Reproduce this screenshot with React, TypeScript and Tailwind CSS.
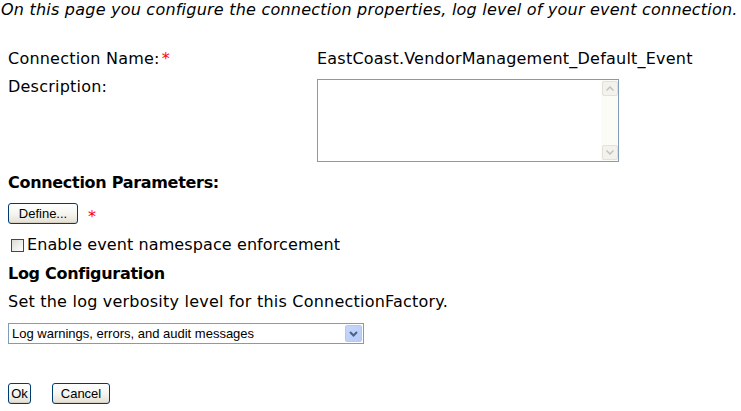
import React from "react";

const XpButton = ({ label, w }: { label: string; w: string }) => (
  <button
    className={`${w} h-[21px] rounded-[3px] border border-[#003c74] bg-gradient-to-b from-white via-[#f6f5f0] to-[#e3e0d3] font-['Liberation_Sans',sans-serif] text-[13px] leading-[19px] tracking-normal text-black shadow-[inset_0_-1px_0_#d6d0c5]`}
  >
    {label}
  </button>
);

export default function App() {
  return (
    <div className="w-[741px] h-[411px] overflow-hidden bg-white font-['DejaVu_Sans',sans-serif] text-[16px] tracking-[0.22px] text-black">
      <p className="italic leading-[20px] pl-[1px] whitespace-nowrap">
        On this page you configure the connection properties, log level of your event connection.
      </p>

      <div className="mt-[29px] ml-[8px] grid grid-cols-[309px_1fr]">
        <div className="h-[28px] leading-[20px]">
          Connection Name:<span className="text-[#ff0000] ml-[2px]">*</span>
        </div>
        <div className="h-[28px] leading-[20px]">EastCoast.VendorManagement_Default_Event</div>
        <div className="leading-[20px]">Description:</div>
        <div className="pt-[2px]">
          <div className="w-[302px] h-[83px] border border-[#7f9db9] bg-white flex justify-end">
            <div className="w-[17px] h-full bg-[#fcfcf7] flex flex-col justify-between">
              <div className="h-[15px] w-[16px] mt-[1px] ml-[1px] rounded-[2px] border border-[#e3e2d6] bg-[#f3f2ec] flex items-center justify-center">
                <svg width="8" height="5" viewBox="0 0 8 5">
                  <path d="M0.5 4.5 L4 1 L7.5 4.5" fill="none" stroke="#c3c3bb" strokeWidth="1.5" />
                </svg>
              </div>
              <div className="h-[15px] w-[16px] mb-[1px] ml-[1px] rounded-[2px] border border-[#e3e2d6] bg-[#f3f2ec] flex items-center justify-center">
                <svg width="8" height="5" viewBox="0 0 8 5">
                  <path d="M0.5 0.5 L4 4 L7.5 0.5" fill="none" stroke="#c3c3bb" strokeWidth="1.5" />
                </svg>
              </div>
            </div>
          </div>
        </div>
      </div>

      <div className="ml-[8px] mt-[11px] font-bold leading-[20px] tracking-[-0.3px]">Connection Parameters:</div>

      <div className="ml-[8px] mt-[10px] flex items-center h-[21px]">
        <XpButton label="Define..." w="w-[70px]" />
        <span className="ml-[10px] text-[#ff0000] leading-[20px] mt-[6px]">*</span>
      </div>

      <div className="ml-[11px] mt-[11px] flex items-center h-[20px]">
        <span className="w-[13px] h-[13px] border border-[#1c5180] bg-gradient-to-br from-[#dcdcd5] to-white" />
        <span className="ml-[3px] leading-[20px] tracking-[0.1px]">Enable event namespace enforcement</span>
      </div>

      <div className="ml-[8px] mt-[9px] font-bold leading-[20px] tracking-[-0.3px]">Log Configuration</div>

      <div className="ml-[8px] mt-[8px] leading-[20px]">Set the log verbosity level for this ConnectionFactory.</div>

      <div className="ml-[8px] mt-[11px] w-[356px] h-[21px] border border-[#7f9db9] bg-white flex items-center justify-between">
        <span className="ml-[3px] font-['Liberation_Sans',sans-serif] text-[13px] leading-[19px] tracking-normal">
          Log warnings, errors, and audit messages
        </span>
        <div className="w-[17px] h-[17px] mr-[1px] rounded-[2px] border border-[#b4c8f6] bg-gradient-to-br from-[#c7d7fb] to-[#b6cbf7] flex items-center justify-center">
          <svg width="9" height="6" viewBox="0 0 9 6">
            <path d="M1 1 L4.5 4.5 L8 1" fill="none" stroke="#4d6185" strokeWidth="2" />
          </svg>
        </div>
      </div>

      <div className="ml-[8px] mt-[39px] flex gap-[21px]">
        <XpButton label="Ok" w="w-[23px]" />
        <XpButton label="Cancel" w="w-[58px]" />
      </div>
    </div>
  );
}
